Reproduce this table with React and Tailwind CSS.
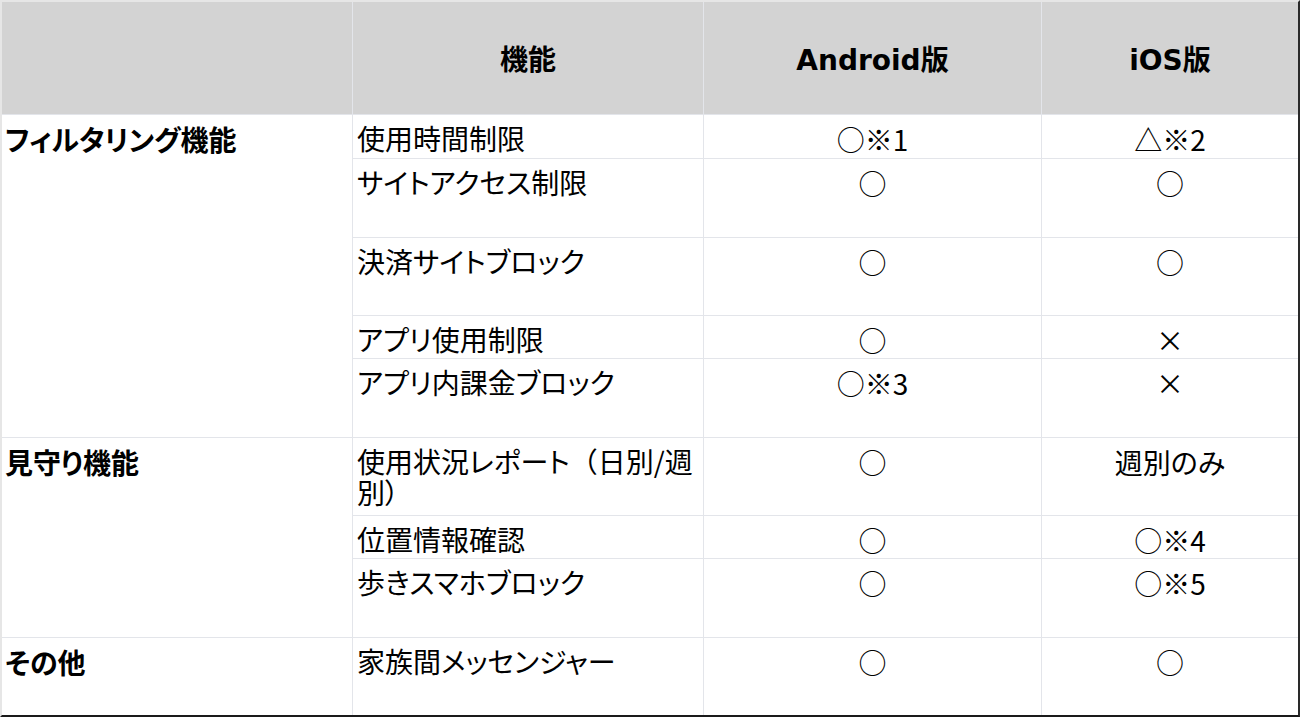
import React from "react";

const jp = "[font-family:'Noto_Sans_CJK_JP','DejaVu_Sans',sans-serif] [font-feature-settings:'palt']";
const head = "[font-family:'DejaVu_Sans','Noto_Sans_CJK_JP',sans-serif] [font-feature-settings:'palt']";

const groups = [
  {
    name: "フィルタリング機能",
    span: "row-span-5",
    rows: [
      ["使用時間制限", "○※1", "△※2"],
      ["サイトアクセス制限", "○", "○"],
      ["決済サイトブロック", "○", "○"],
      ["アプリ使用制限", "○", "×"],
      ["アプリ内課金ブロック", "○※3", "×"],
    ],
  },
  {
    name: "見守り機能",
    span: "row-span-3",
    rows: [
      [
        <>
          使用状況レポート<span className="[font-feature-settings:normal]">（</span>日別/週
          <br />
          別）
        </>,
        "○",
        "週別のみ",
      ],
      ["位置情報確認", "○", "○※4"],
      ["歩きスマホブロック", "○", "○※5"],
    ],
  },
  {
    name: "その他",
    span: "row-span-1",
    rows: [["家族間メッセンジャー", "○", "○"]],
  },
];

function HeadCell({ children }) {
  return (
    <div className={`bg-[#d3d3d3] flex items-center justify-center pt-[6px] text-[28px] font-bold text-black ${head}`}>
      {children}
    </div>
  );
}

export default function App() {
  return (
    <div className="w-[1300px] h-[717px] bg-white border-t-2 border-l-2 border-t-[#e6e6e6] border-l-[#e6e6e6] border-r-2 border-b-2 border-r-[#2a2a2a] border-b-[#1a1a1a]">
      <div className="grid grid-cols-[350px_350px_337px_256px] grid-rows-[112px_43px_78px_77px_42px_78px_77px_42px_78px_77px] gap-px bg-[#e3e5ea] h-[713px]">
        <HeadCell />
        <HeadCell>機能</HeadCell>
        <HeadCell>Android版</HeadCell>
        <HeadCell>iOS版</HeadCell>

        {groups.map((g) => (
          <React.Fragment key={g.name}>
            <div className={`${g.span} col-start-1 bg-white pl-[3px] pt-[9px] text-[28px] leading-[30px] font-bold text-black ${jp}`}>
              {g.name}
            </div>
            {g.rows.map((r, i) => (
              <React.Fragment key={i}>
                <div className={`col-start-2 bg-white pl-[4px] pt-[8px] text-[28px] leading-[31px] text-black ${jp}`}>
                  {r[0]}
                </div>
                <div className={`bg-white pt-[9px] text-center text-[28px] leading-[30px] text-black ${jp}`}>
                  {r[1]}
                </div>
                <div className={`bg-white pt-[9px] text-center text-[28px] leading-[30px] text-black ${jp}`}>
                  {r[2]}
                </div>
              </React.Fragment>
            ))}
          </React.Fragment>
        ))}
      </div>
    </div>
  );
}
